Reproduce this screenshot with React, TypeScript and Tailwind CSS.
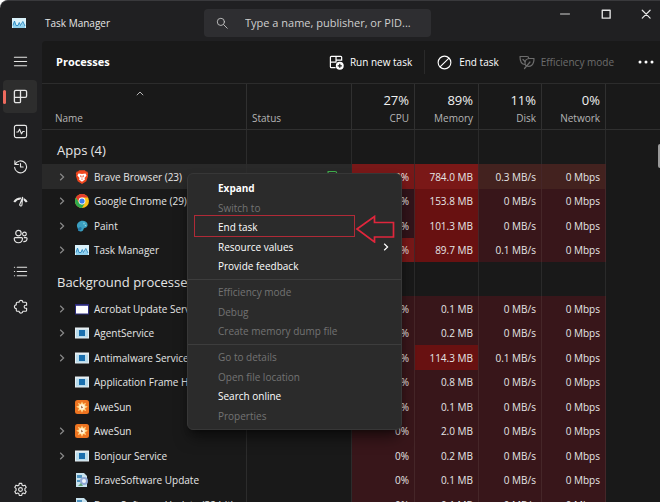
import type { ReactNode } from 'react';

type IconName = 'brave' | 'chrome' | 'paint' | 'monitor' | 'window' | 'app' | 'awesun' | 'update';

interface Process {
  name: string;
  icon: IconName;
  expandable: boolean;
  cpu: string;
  memory: string;
  disk: string;
  network: string;
  cpuHeat?: 'high' | 'low';
  memoryHeat?: 'high';
  selected?: boolean;
}

const APPS: Process[] = [
  { name: 'Brave Browser (23)', icon: 'brave', expandable: true, cpu: '2.2%', memory: '784.0 MB', disk: '0.3 MB/s', network: '0 Mbps', cpuHeat: 'high', memoryHeat: 'high', selected: true },
  { name: 'Google Chrome (29)', icon: 'chrome', expandable: true, cpu: '0%', memory: '153.8 MB', disk: '0 MB/s', network: '0 Mbps', cpuHeat: 'low', memoryHeat: 'high' },
  { name: 'Paint', icon: 'paint', expandable: true, cpu: '0%', memory: '101.3 MB', disk: '0 MB/s', network: '0 Mbps', cpuHeat: 'low', memoryHeat: 'high' },
  { name: 'Task Manager', icon: 'monitor', expandable: true, cpu: '1.3%', memory: '89.7 MB', disk: '0.1 MB/s', network: '0 Mbps', cpuHeat: 'high', memoryHeat: 'high' },
];

const BACKGROUND: Process[] = [
  { name: 'Acrobat Update Service', icon: 'window', expandable: true, cpu: '0%', memory: '0.1 MB', disk: '0 MB/s', network: '0 Mbps' },
  { name: 'AgentService', icon: 'app', expandable: true, cpu: '0%', memory: '0.2 MB', disk: '0 MB/s', network: '0 Mbps' },
  { name: 'Antimalware Service', icon: 'app', expandable: true, cpu: '0%', memory: '114.3 MB', disk: '0.1 MB/s', network: '0 Mbps', memoryHeat: 'high' },
  { name: 'Application Frame Host', icon: 'app', expandable: false, cpu: '0%', memory: '0.8 MB', disk: '0 MB/s', network: '0 Mbps' },
  { name: 'AweSun', icon: 'awesun', expandable: false, cpu: '0%', memory: '0.1 MB', disk: '0 MB/s', network: '0 Mbps' },
  { name: 'AweSun', icon: 'awesun', expandable: true, cpu: '0%', memory: '2.0 MB', disk: '0 MB/s', network: '0 Mbps' },
  { name: 'Bonjour Service', icon: 'app', expandable: true, cpu: '0%', memory: '0.2 MB', disk: '0 MB/s', network: '0 Mbps' },
  { name: 'BraveSoftware Update', icon: 'update', expandable: false, cpu: '0%', memory: '0.1 MB', disk: '0 MB/s', network: '0 Mbps' },
  { name: 'BraveSoftware Update (32 bit)', icon: 'update', expandable: false, cpu: '0%', memory: '0.1 MB', disk: '0 MB/s', network: '0 Mbps' },
];

const USAGE = [
  { label: 'CPU', value: '27%' },
  { label: 'Memory', value: '89%' },
  { label: 'Disk', value: '11%' },
  { label: 'Network', value: '0%' },
];

const MENU = [
  [
    { label: 'Expand', bold: true },
    { label: 'Switch to', disabled: true },
    { label: 'End task', marked: true },
    { label: 'Resource values', submenu: true },
    { label: 'Provide feedback' },
  ],
  [
    { label: 'Efficiency mode', disabled: true },
    { label: 'Debug', disabled: true },
    { label: 'Create memory dump file', disabled: true },
  ],
  [
    { label: 'Go to details', disabled: true },
    { label: 'Open file location', disabled: true },
    { label: 'Search online' },
    { label: 'Properties', disabled: true },
  ],
] as { label: string; bold?: boolean; disabled?: boolean; marked?: boolean; submenu?: boolean }[][];

function LineIcon({ children, className = 'size-4' }: { children: ReactNode; className?: string }) {
  return (
    <svg viewBox="0 0 16 16" className={className} fill="none" stroke="currentColor" strokeWidth="1.2" strokeLinecap="round" strokeLinejoin="round" aria-hidden="true">
      {children}
    </svg>
  );
}

const NAV = [
  { label: 'Open navigation', icon: <path d="M1.5 3.5h13M1.5 8h13M1.5 12.5h13" /> },
  {
    label: 'Processes',
    active: true,
    icon: <path d="M3 1.500h10a1.500 1.500 0 0 1 1.500 1.500v4.500A1.500 1.500 0 0 1 13 9H8v4.500a1 1 0 0 1-1 1H3A1.500 1.500 0 0 1 1.500 13V3A1.500 1.500 0 0 1 3 1.500zM8 1.500V9H1.500" strokeWidth="1.400" />,
  },
  {
    label: 'Performance',
    icon: (
      <>
        <rect x="1.500" y="1.500" width="13" height="13" rx="2" />
        <path d="M4 8.500h1.500L7 5.500l2 5L10.500 8H12" />
      </>
    ),
  },
  { label: 'App history', icon: <path d="M2 2v3.800h3.800M2.300 5.600A6.400 6.400 0 1 1 1.700 9M8 4.800v3.700h2.800" /> },
  {
    label: 'Startup apps',
    icon: (
      <>
        <path d="M1.300 8.500a8 8 0 0 1 13.400 0" strokeWidth="2.200" strokeLinecap="butt" />
        <path d="M10.300 3.500 7.200 11.200a1.200 1.200 0 1 0 2.300.7z" fill="#202022" stroke="#202022" strokeWidth="2.400" />
        <path d="M10.300 3.500 7.200 11.200a1.200 1.200 0 1 0 2.300.7z" />
      </>
    ),
  },
  {
    label: 'Users',
    icon: (
      <>
        <circle cx="5.800" cy="4.400" r="2.900" />
        <circle cx="12.200" cy="5.300" r="2" />
        <path d="M2.300 9.200h6.800a1 1 0 0 1 1 1c0 2.800-1.500 4.500-4.300 4.500s-4.500-1.700-4.500-4.500a1 1 0 0 1 1-1zM12 9.200h2a1 1 0 0 1 1 1c0 2-1.300 3.300-3.500 3.300" />
      </>
    ),
  },
  { label: 'Details', icon: <path d="M1.500 3.500h.2M1.500 8h.2M1.500 12.500h.2M4.500 3.500h10M4.500 8h10M4.500 12.500h10" /> },
  {
    label: 'Services',
    icon: <path d="M4.500 3.500h2a2 2 0 0 1 4 0h3a1 1 0 0 1 1 1v2.200h-1a1.600 1.600 0 0 0 0 3.200h1V12a1 1 0 0 1-1 1h-3a2 2 0 0 1-4 0h-2a1 1 0 0 1-1-1v-1.800a2 2 0 0 1 0-4V4.500a1 1 0 0 1 1-1z" />,
  },
];

function GearIcon() {
  return (
    <LineIcon className="size-[15px]">
      <circle cx="8" cy="8" r="2" />
      <path d="M6.700 1.500h2.600l.4 1.900 1.200.7 1.900-.7 1.300 2.300-1.400 1.300v1.900l1.400 1.300-1.300 2.300-1.900-.7-1.200.7-.4 1.900H6.700l-.4-1.900-1.200-.7-1.900.7-1.300-2.300 1.400-1.300V7L1.900 5.700l1.300-2.300 1.900.7 1.200-.7z" />
    </LineIcon>
  );
}

function MonitorIcon() {
  return (
    <svg viewBox="0 0 14 14" className="size-[14px] shrink-0" aria-hidden="true">
      <rect y="2" width="14" height="10" fill="#d9f1fa" />
      <path d="M1 12V8l1.500-3L4 9l1.500 1 1.500-3.500 1 3h1.500L11 6l1 3 1 1v2z" fill="#8fd0ee" />
      <path d="M1 9.500 2.500 5 4 9.500h2L7.300 6.500 8.500 9.500 10.800 5.500 13 10" fill="none" stroke="#2586c0" strokeWidth=".9" />
    </svg>
  );
}

function ProcessIcon({ icon }: { icon: IconName }) {
  if (icon === 'monitor') return <MonitorIcon />;
  return (
    <svg viewBox="0 0 14 14" className="size-[14px] shrink-0" aria-hidden="true">
      {icon === 'brave' && (
        <>
          <path d="M4.200.3h5.600l1.200 1.200 1.200-.1 1 2-.4 1L13 6.200l-1.700 5L7 14l-4.300-2.800L1 6.200l.2-1.800-.4-1 1-2 1.200.1z" fill="#f0471f" />
          <path d="M3.500 3.500 7 4l3.500-.5 1 2-2 2.500.5 1.500L7 11.800 4 9.500 4.500 8l-2-2.500z" fill="#fff" />
          <path d="M5 5.200l1.500.6v2L5.500 7zM9 5.200l-1.500.6v2l1-.8zM6 9l1-.5L8 9l-1 .8z" fill="#f0471f" />
        </>
      )}
      {icon === 'chrome' && (
        <>
          <circle cx="7" cy="7" r="7" fill="#fbc116" />
          <path d="M.94 3.500A7 7 0 0 1 13.060 3.500H7a3.500 3.500 0 0 0-3.030 5.250z" fill="#e33b2e" />
          <path d="M.94 3.500A7 7 0 0 0 7 14l3.030-5.250a3.500 3.500 0 0 1-6.060 0z" fill="#2da94f" />
          <circle cx="7" cy="7" r="3.400" fill="#fff" />
          <circle cx="7" cy="7" r="2.600" fill="#3b7ded" />
        </>
      )}
      {icon === 'paint' && (
        <>
          <path d="M2 7.500C1.500 4 4.500 1.500 8 1.700c3 .2 5 2.300 4.500 4.800-.4 2-2 2.300-3 2.500-1.200.3-.8 1.500-1.500 2.500-1 1.300-3 1.300-4.500.3z" fill="#3b9fc0" />
          <path d="M3 9.500c1-.5 1.500-1.500 2.500-1.500s1.500 1 1 2-2 2-3.500 1.700z" fill="#2277a8" />
          <circle cx="9" cy="4.400" r="1" fill="#6fc6d8" />
          <circle cx="10.500" cy="6.500" r=".8" fill="#8ed6e2" />
        </>
      )}
      {icon === 'window' && (
        <>
          <rect y="2" width="14" height="10.500" fill="#2b2a7c" />
          <rect x="1" y="3.800" width="12" height="7.700" fill="#fff" />
        </>
      )}
      {icon === 'app' && (
        <>
          <rect y="1.500" width="14" height="11" fill="#e6eef2" />
          <rect x="1" y="3.500" width="12" height="8" fill="#b9dcec" />
          <rect x="4" y="4" width="6" height="6" fill="#1a6fae" />
        </>
      )}
      {icon === 'awesun' && (
        <>
          <rect width="14" height="14" rx="2.500" fill="#ee7420" />
          <path d="M7 1.500 8.300 4l2.700-1.200L10 5.500l2.800 1.300L10 8.200l1.200 2.900-2.900-1L7 12.800l-1.300-2.700-2.900 1L4 8.200 1.200 6.800 4 5.500 2.900 2.800 5.700 4z" fill="#ffd98a" />
          <circle cx="7" cy="7" r="2.700" fill="#fff3dd" />
          <path d="M6.300 5.600v3l.8-.8h1.100z" fill="#8a4a1c" />
        </>
      )}
      {icon === 'update' && (
        <>
          <path d="M1 0h8l3 3v11H1z" fill="#c8e2ee" />
          <path d="M2 2h5v3H2zM2 7h3v2H2z" fill="#4f93bf" />
          <circle cx="9" cy="8" r="4" fill="#8fa8d6" />
          <circle cx="9" cy="8" r="2" fill="#eef4fb" />
          <path d="M3 13l3-3 2 3z" fill="#62a37c" />
        </>
      )}
    </svg>
  );
}

function Leaves({ className }: { className: string }) {
  return (
    <LineIcon className={className}>
      <path d="M5.500 10.500C2.500 10 1 7.500 1 2.500h7c1 0 1.700.8 1.700 1.800M4 5.500l2 2" />
      <path d="M15 4.500h-4.500C7.500 4.500 6 6.500 6 9c0 1.500.6 2.500 1.200 3 4.300 1.300 7.800-.8 7.800-7.500zM5.500 14.500 11 8" />
    </LineIcon>
  );
}

function Chevron({ className }: { className: string }) {
  return (
    <svg viewBox="0 0 6 8" className={className} fill="none" stroke="currentColor" strokeWidth="1.200" aria-hidden="true">
      <path d="M1.200.8 4.600 4 1.200 7.200" />
    </svg>
  );
}

function ProcessRow({ process }: { process: Process }) {
  const { selected } = process;
  const base = selected ? 'bg-[#43221f]' : 'bg-[#38161a]';
  const memory = process.memoryHeat ? (selected ? 'bg-[#7a1817]' : 'bg-[#681111]') : base;
  const cpu = process.cpuHeat === 'high' ? 'bg-[#781818]' : process.cpuHeat === 'low' ? 'bg-[#31141a]' : base;
  return (
    <tr className={`h-6 even:h-[25px] ${selected ? 'bg-[#292929]' : ''}`}>
      <td className="overflow-hidden border-r border-[#2c2c2c] p-0 whitespace-nowrap">
        <div className="flex items-center gap-[5px] pl-[17px]">
          <span className="flex w-[11px] shrink-0">
            {process.expandable && (
              <button aria-label={`Expand ${process.name}`} className="text-[#8a8a8a]">
                <Chevron className="h-2 w-1.5" />
              </button>
            )}
          </span>
          <ProcessIcon icon={process.icon} />
          <span>{process.name}</span>
        </div>
      </td>
      <td className="border-r border-[#2c2c2c] p-0">
        {selected && <Leaves className="mr-2 ml-auto size-4 text-[#3fae4b]" />}
      </td>
      <td className={`border-r border-[#452628] py-0 pr-[5px] text-right ${cpu}`}>{process.cpu}</td>
      <td className={`border-r border-[#452628] py-0 pr-[5px] text-right ${memory}`}>{process.memory}</td>
      <td className={`border-r border-[#452628] py-0 pr-[5px] text-right ${base}`}>{process.disk}</td>
      <td className={`border-r border-[#452628] py-0 pr-[5px] text-right ${base}`}>{process.network}</td>
      <td className="bg-[#191919]" />
    </tr>
  );
}

function GroupHeading({ title }: { title: string }) {
  return (
    <tr className="h-[34px]">
      <th scope="colgroup" className="border-r border-[#2c2c2c] pt-1.5 pb-0 pl-[15px] text-left text-[13px] leading-5 font-normal whitespace-nowrap">
        {title}
      </th>
      {[0, 1, 2, 3, 4].map((i) => (
        <td key={i} className="border-r border-[#2a2a2a]" />
      ))}
      <td />
    </tr>
  );
}

function ContextMenu() {
  return (
    <div role="menu" className="absolute top-[172px] left-[187px] w-[215px] rounded-md border border-[#373737] bg-[#2b2b2b] py-1 shadow-lg shadow-black/50">
      {MENU.map((group, i) => (
        <div key={i} className={i > 0 ? 'mt-[3px] border-t border-[#3d3d3d] pt-0.5' : ''}>
          {group.map((item) => (
            <button
              key={item.label}
              role="menuitem"
              disabled={item.disabled}
              className={`relative flex h-5 w-full items-center justify-between pr-3 pl-[30px] even:h-[19px] ${item.bold ? 'font-bold' : ''} ${item.disabled ? 'text-[#737373]' : 'text-white'}`}
            >
              {item.label}
              {item.submenu && <Chevron className="h-2 w-1.5" />}
              {item.marked && (
                <>
                  <span className="absolute -top-0.5 left-1.5 h-[22px] w-[161px] border border-[#b02a37]" />
                  <svg viewBox="0 0 40 28" className="absolute -top-0.5 left-[167px] h-7 w-10" fill="none" stroke="#e0263c" strokeWidth="1.700" aria-hidden="true">
                    <path d="M2 14 19.500 1.500v6H38.500v14.500H19.500v5z" />
                  </svg>
                </>
              )}
            </button>
          ))}
        </div>
      ))}
    </div>
  );
}

export default function App() {
  return (
    <div className="relative flex h-screen flex-col overflow-hidden rounded-tl-lg border-t border-[#39393c] bg-[#202022] font-['Open_Sans','Noto_Sans',sans-serif] text-[10px] leading-4 text-[#e6e6e6]">
      {/* Title bar */}
      <header className="flex h-10 shrink-0 items-center">
        <div className="flex w-[204px] items-center gap-[19px] pt-1 pl-3">
          <MonitorIcon />
          <h1>Task Manager</h1>
        </div>
        <label className="mt-1 flex h-7 w-[227px] items-center gap-[17px] rounded bg-[#2e2e31] pl-3 text-[#c5c5c5]">
          <LineIcon className="size-3 shrink-0">
            <circle cx="6.500" cy="6.500" r="4.800" />
            <path d="m10.500 10.500 4.500 4.500" />
          </LineIcon>
          <input aria-label="Search processes" placeholder="Type a name, publisher, or PID..." className="w-full min-w-0 bg-transparent text-[11px] outline-none placeholder:text-[#cfcfcf]" />
        </label>
        <div className="mr-2 ml-auto flex h-full w-[93px] items-start justify-between pt-[5px]">
          <button aria-label="Minimize" className="flex h-4 items-center">
            <LineIcon className="size-3"><path d="M2 8h12" /></LineIcon>
          </button>
          <button aria-label="Maximize" className="flex h-4 items-center">
            <LineIcon className="size-3"><rect x="3" y="3" width="10.500" height="10.500" strokeWidth="1.800" /></LineIcon>
          </button>
          <button aria-label="Close" className="flex h-4 items-center">
            <LineIcon className="size-3"><path d="m3 3 10.500 10.500M13.500 3 3 13.500" strokeWidth="1.600" /></LineIcon>
          </button>
        </div>
      </header>

      <div className="flex min-h-0 flex-1">
        {/* Navigation rail */}
        <nav className="flex w-[42px] shrink-0 flex-col bg-[#202022] pt-[3px]">
          {NAV.map((item) => (
            <button
              key={item.label}
              aria-label={item.label}
              className={`relative mx-[3px] my-px flex h-[33px] w-[34px] shrink-0 items-center justify-center rounded ${item.active ? 'bg-[#2d2d2d]' : ''}`}
            >
              {item.active && <span className="absolute left-0 h-3.5 w-[3px] rounded bg-[#ee6a5e]" />}
              <LineIcon className="size-[15px]">{item.icon}</LineIcon>
            </button>
          ))}
          <button aria-label="Settings" className="mt-auto mb-1 ml-[3px] flex h-[17px] w-[34px] items-center justify-center">
            <GearIcon />
          </button>
        </nav>

        <main className="flex min-w-0 flex-1 flex-col overflow-hidden rounded-tl bg-[#191919]">
          <div className="flex h-[42px] shrink-0 items-center pr-1.5 pl-3.5">
            <h2 className="mr-auto text-[11px] font-bold text-white">Processes</h2>
            <button className="flex items-center gap-1.5 text-white">
              <svg viewBox="0 0 16 16" className="size-[15px]" fill="none" stroke="currentColor" strokeWidth="1.300" aria-hidden="true">
                <path d="M7 13.500H2.500a1 1 0 0 1-1-1v-10a1 1 0 0 1 1-1h10a1 1 0 0 1 1 1V6M7.500 1.500v6M1.500 7.500H8M7.500 5.500h6" />
                <circle cx="11.500" cy="11.500" r="4.200" fill="#fff" stroke="none" />
                <path d="M11.500 9.300v4.400M9.300 11.500h4.400" stroke="#191919" />
              </svg>
              Run new task
            </button>
            <span className="mx-3 h-6 w-px bg-[#2a2a2a]" />
            <button className="flex items-center gap-[7px] text-white">
              <LineIcon className="size-[15px]">
                <circle cx="8" cy="8" r="6.800" />
                <path d="m3.500 12.500 9-9" />
              </LineIcon>
              End task
            </button>
            <button disabled className="ml-5 flex items-center gap-1.5 text-[#6d6d6d]">
              <Leaves className="size-4" />
              Efficiency mode
            </button>
            <button aria-label="More options" className="ml-6">
              <svg viewBox="0 0 16 4" className="h-1 w-4" fill="#fff" aria-hidden="true">
                <circle cx="2" cy="2" r="1.500" />
                <circle cx="8" cy="2" r="1.500" />
                <circle cx="14" cy="2" r="1.500" />
              </svg>
            </button>
          </div>

          <div className="relative min-h-0 flex-1 overflow-hidden border-t border-[#2c2c2c]">
            <table className="w-full table-fixed border-separate border-spacing-0">
              <colgroup>
                <col />
                <col className="w-[105px]" />
                <col className="w-[63px]" />
                <col className="w-16" />
                <col className="w-[63px]" />
                <col className="w-16" />
                <col className="w-[54px]" />
              </colgroup>
              <thead>
                <tr className="h-[46px]">
                  <th scope="col" aria-sort="ascending" className="border-r border-b border-[#303030] p-0 align-bottom font-normal text-[#b5b5b5]">
                    <span className="mb-3.5 flex justify-center pr-2">
                      <svg viewBox="0 0 8 5" className="h-[5px] w-2" fill="none" stroke="currentColor" aria-hidden="true">
                        <path d="M.8 4.200 4 1l3.200 3.200" />
                      </svg>
                    </span>
                    <span className="block pb-[3px] pl-[13px] text-left">Name</span>
                  </th>
                  <th scope="col" className="border-r border-b border-[#303030] pb-[3px] pl-[5px] text-left align-bottom font-normal text-[#b5b5b5]">Status</th>
                  {USAGE.map((u) => (
                    <th key={u.label} scope="col" className="border-r border-b border-[#303030] pr-[5px] pb-[3px] text-right align-bottom font-normal text-[#b5b5b5]">
                      <span className="block text-[13px] leading-5 text-[#f0f0f0]">{u.value}</span>
                      {u.label}
                    </th>
                  ))}
                  <th className="border-b border-[#303030]" />
                </tr>
              </thead>
              <tbody>
                <GroupHeading title="Apps (4)" />
                {APPS.map((p) => (
                  <ProcessRow key={p.name} process={p} />
                ))}
              </tbody>
              <tbody>
                <GroupHeading title="Background processes (89)" />
                {BACKGROUND.map((p, i) => (
                  <ProcessRow key={i} process={p} />
                ))}
              </tbody>
            </table>
            <span className="absolute top-[60px] right-0 h-6 w-0.5 rounded-l bg-[#9a9a9a]" />
          </div>
        </main>
      </div>

      <ContextMenu />
    </div>
  );
}
